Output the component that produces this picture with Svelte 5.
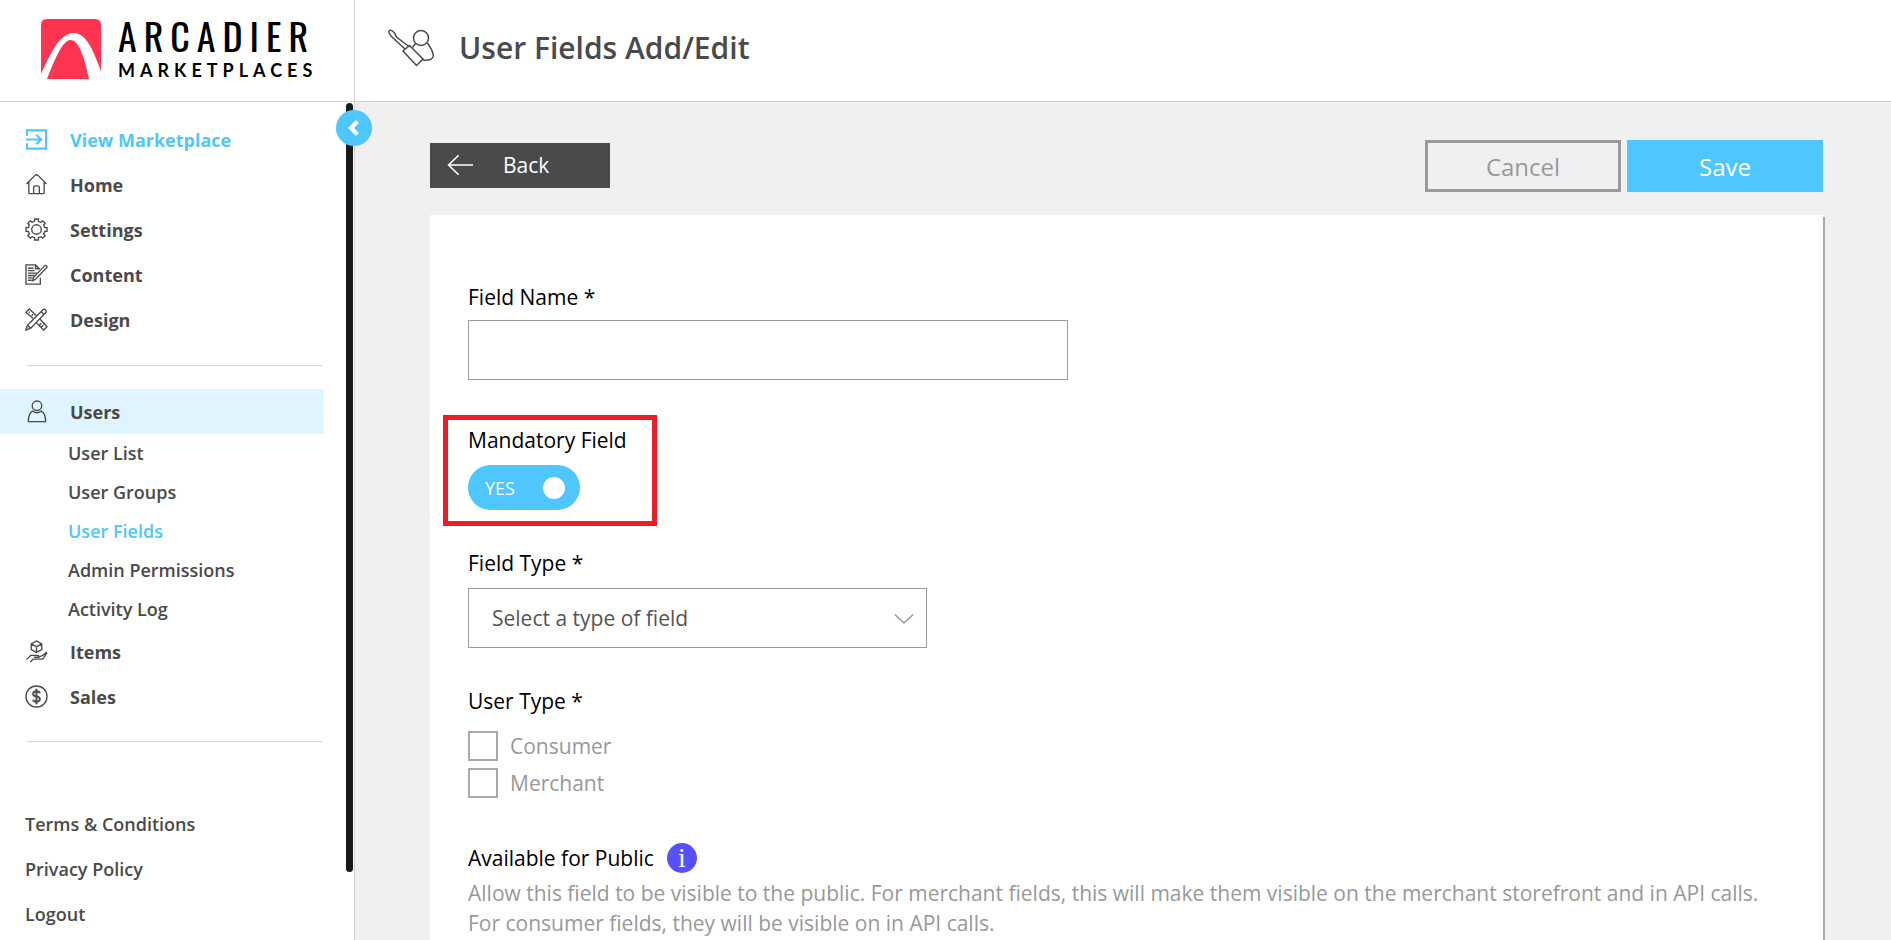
<script>
    const mainLinks = [
        { icon: "exit", label: "View Marketplace", highlight: true },
        { icon: "home", label: "Home" },
        { icon: "settings", label: "Settings" },
        { icon: "content", label: "Content" },
        { icon: "design", label: "Design" },
    ];
    const userLinks = ["User List", "User Groups", "User Fields", "Admin Permissions", "Activity Log"];
    const shopLinks = [
        { icon: "items", label: "Items" },
        { icon: "sales", label: "Sales" },
    ];
    const footerLinks = ["Terms & Conditions", "Privacy Policy", "Logout"];
    const fieldTypes = ["Textfield", "Number", "Checkbox", "Dropdown"];
    const userTypes = ["Consumer", "Merchant"];

    let fieldName = "";
    let mandatory = true;
    let fieldType = "";
    let selectedTypes = [];
    let currentPage = "User Fields";
    let collapsed = false;
</script>

{#snippet icon(name)}
    <svg class="icon" viewBox="0 0 24 24" aria-hidden="true">
        {#if name === "exit"}
            <path d="M2 8V2.500h20v19H2V16M1 12h16M11.500 7l5.500 5-5.500 5" stroke-width="2.200" />
        {:else if name === "home"}
            <path d="M1.500 11.500L10.500 2.500q1.500-1.300 3 0l9 9M4 9.500v11q0 1 1 1h14q1 0 1-1v-11M9 21.500v-6q0-2 2-2h2q2 0 2 2v6" />
        {:else if name === "settings"}
            <circle cx="12" cy="12" r="5" />
            <path d="M10 1h4v2.500l2.500 1L18.500 3 21 5.500 19.500 7.500l1 2.500H23v4h-2.500l-1 2.500L21 18.500 18.500 21l-2-1.500-2.500 1V23h-4v-2.500l-2.500-1L5.500 21 3 18.500l1.500-2-1-2.500H1v-4h2.500l1-2.500L3 5.500 5.500 3l2 1.500 2.500-1z" />
        {:else if name === "content"}
            <path d="M16 15.500V22H1V2h10l4.500 4.500M11 2v4h4M3 5.500h6M3 8h7M3 10.500h10M3 13h7M3 15.500h5M3 18h4" />
            <path d="M8 18.500l1-3.500L20.500 3q1-1 2 0t0 2L11 17z" />
        {:else if name === "design"}
            <path d="M8.500 11L1 4.500 4.500 1l7.500 7M15.500 11.500L23 19.500 19.500 23 12 15.500M15 18l2-2M17 20l2-2M19 17l2-1M4 5l1-1M7 8l1.500-1.500" />
            <path d="M1 23l1.500-5L18.500 2q1.500-1.500 3 0t0 3L6 21zM17 4l3 3M2.500 18L6 21" />
        {:else if name === "user"}
            <circle cx="12.500" cy="6" r="5" />
            <path d="M8 11.500q-4.500 2-4.500 11h18q0-9-4.500-11-4.500 3.500-9 0z" />
        {:else if name === "items"}
            <path d="M12 1l5.500 3v6L12 13 6.500 10V4zM6.500 4L12 7l5.500-3M12 7v6" />
            <path d="M1.500 20.500L6 16h7q2 0 1.500 2H9.500M14.500 18L20 15l2-2q1-.5.500 1l-4 6h-10l-3 3" />
        {:else if name === "sales"}
            <circle cx="12" cy="12" r="11" />
            <path d="M12 4v16M15.500 8.500Q15 6.500 12 6.500t-3.500 2.500T12 12t3.500 3-3.500 2.500-3.500-2" stroke-width="2" />
        {/if}
    </svg>
{/snippet}

<div class="page">
    <aside class="sidebar">
        <a class="logo" href="#home">
            <svg viewBox="0 0 60 60" aria-hidden="true">
                <path d="M0 6Q0 0 6 0h48q6 0 6 6v46C53 34 46 14 33 14 18 14 9 36 0 55z" fill="#ff3451" />
                <path d="M6 60C14 39 22 21 29.500 21 38 21 43 38 48 60z" fill="#ff3451" />
            </svg>
            <span class="brand">
                <span class="brand-name">ARCADIER</span>
                <span class="brand-sub">MARKETPLACES</span>
            </span>
        </a>
        <nav>
            {#each mainLinks as link}
                <a class="nav-link" class:highlight={link.highlight} href="#{link.icon}">
                    {@render icon(link.icon)}
                    {link.label}
                </a>
            {/each}
            <hr />
            <a class="nav-link selected" href="#users">
                {@render icon("user")}
                Users
            </a>
            {#each userLinks as label}
                <a class="sub-link" class:highlight={label === currentPage} href="#users">{label}</a>
            {/each}
            {#each shopLinks as link}
                <a class="nav-link" href="#{link.icon}">
                    {@render icon(link.icon)}
                    {link.label}
                </a>
            {/each}
            <hr class="last" />
            {#each footerLinks as label}
                <a class="footer-link" href="#info">{label}</a>
            {/each}
        </nav>
        <div class="scrollbar"></div>
        <button class="collapse" aria-label="Toggle menu" on:click={() => (collapsed = !collapsed)}>
            <svg viewBox="0 0 12 16" aria-hidden="true"><path d="M9.500 1.500L3 8l6.500 6.500" /></svg>
        </button>
    </aside>

    <main>
        <header>
            <svg viewBox="0 0 48 38" aria-hidden="true">
                <circle cx="34" cy="9" r="7.500" />
                <path d="M28.500 14.500l-3 4M40.500 14q7 10 5.500 14-2 4-10 3" />
                <path d="M16 22l6.500-5.500L36 30l-6.500 6.500zM18 20L4.500 7.500q-4-4-2-6 2-1 5 2.500l2 4L22.500 18" />
            </svg>
            <h1>User Fields Add/Edit</h1>
        </header>

        <div class="content">
            <div class="toolbar">
                <button class="back">
                    <svg viewBox="0 0 28 22" aria-hidden="true"><path d="M27 11H1M12 1L1.500 11 12 21" /></svg>
                    Back
                </button>
                <div class="actions">
                    <button class="cancel">Cancel</button>
                    <button class="save">Save</button>
                </div>
            </div>

            <form class="card">
                <div class="group">
                    <label class="title" for="field-name">Field Name *</label>
                    <input class="text" id="field-name" type="text" bind:value={fieldName} />
                </div>

                <div class="group mandatory">
                    <label class="title" for="mandatory">Mandatory Field</label>
                    <label class="switch" class:on={mandatory}>
                        <input id="mandatory" type="checkbox" bind:checked={mandatory} />
                        <span>{mandatory ? "YES" : "NO"}</span>
                        <span class="knob"></span>
                    </label>
                    <div class="marker"></div>
                </div>

                <div class="group">
                    <label class="title" for="field-type">Field Type *</label>
                    <div class="select">
                        <select id="field-type" bind:value={fieldType}>
                            <option value="">Select a type of field</option>
                            {#each fieldTypes as type}
                                <option value={type}>{type}</option>
                            {/each}
                        </select>
                        <svg viewBox="0 0 20 12" aria-hidden="true"><path d="M1 1.500l9 8.500 9-8.500" /></svg>
                    </div>
                </div>

                <fieldset class="group">
                    <legend class="title">User Type *</legend>
                    {#each userTypes as type}
                        <label class="check">
                            <input type="checkbox" value={type} bind:group={selectedTypes} />
                            {type}
                        </label>
                    {/each}
                </fieldset>

                <div class="group">
                    <div class="title public">
                        Available for Public
                        <span class="info">i</span>
                    </div>
                    <p>
                        Allow this field to be visible to the public. For merchant fields, this will make them visible on the merchant storefront and in API calls.<br />
                        For consumer fields, they will be visible on in API calls.
                    </p>
                </div>
            </form>
        </div>
    </main>
</div>

<style>
    :global(body) {
        overflow: hidden;
    }
    .page {
        display: flex;
        height: 100vh;
        overflow: hidden;
        background-color: #f0f0f0;
        color: #4a4a4a;
        font-family: "Open Sans", "Noto Sans", sans-serif;
    }
    .page * {
        box-sizing: border-box;
    }
    a {
        color: inherit;
        text-decoration: none;
    }
    button,
    input,
    select {
        margin: 0;
        font-family: inherit;
        border-radius: 0;
    }
    svg {
        fill: none;
        stroke: currentColor;
        flex: none;
    }

    .sidebar {
        position: relative;
        flex: none;
        width: 355px;
        background-color: #fff;
        border-right: 1px solid #d0d0d0;
    }
    .logo {
        display: flex;
        gap: 17px;
        height: 102px;
        padding: 19px 0 0 41px;
        border-bottom: 1px solid #d0d0d0;
        color: #000;
    }
    .logo svg {
        width: 60px;
        height: 60px;
        stroke: none;
    }
    .brand {
        display: flex;
        flex-direction: column;
    }
    .brand-name {
        font-family: "Oswald", "Roboto Condensed", "DejaVu Sans Condensed", sans-serif;
        font-size: 38px;
        letter-spacing: 7px;
        line-height: 32px;
    }
    .brand-sub {
        font-family: Lato, sans-serif;
        font-size: 18px;
        font-weight: 700;
        letter-spacing: 5px;
        line-height: 38px;
    }
    nav {
        padding-top: 15px;
        font-size: 18px;
    }
    .nav-link {
        display: flex;
        align-items: center;
        gap: 22px;
        width: 324px;
        height: 45px;
        padding-left: 25px;
        font-weight: 700;
    }
    .icon {
        width: 23px;
        height: 23px;
        stroke-width: 1.4;
    }
    .selected {
        background-color: #dff4fe;
    }
    .highlight {
        color: #50c6ff;
    }
    hr {
        width: 295px;
        height: 1px;
        margin: 23px 0 23px 27px;
        border: 0;
        background-color: #d4d5d5;
    }
    hr.last {
        margin-top: 22px;
        margin-bottom: 60px;
    }
    .sub-link,
    .footer-link {
        display: block;
        padding-left: 68px;
        line-height: 39px;
        font-weight: 600;
    }
    .footer-link {
        padding-left: 25px;
        line-height: 45px;
    }
    .scrollbar {
        position: absolute;
        top: 103px;
        right: 1px;
        bottom: 68px;
        width: 7px;
        border-radius: 4px;
        background-color: #18191a;
    }
    .collapse {
        position: absolute;
        top: 110px;
        right: -18px;
        display: flex;
        align-items: center;
        justify-content: center;
        width: 36px;
        height: 36px;
        padding: 0;
        border: 0;
        border-radius: 50%;
        background-color: #50c6ff;
        color: #fff;
    }
    .collapse svg {
        width: 12px;
        height: 16px;
        stroke-width: 4;
    }

    main {
        flex: 1;
        min-width: 0;
    }
    header {
        display: flex;
        align-items: center;
        gap: 24px;
        height: 102px;
        padding: 0 32px 6px;
        background-color: #fff;
        border-bottom: 1px solid #d0d0d0;
    }
    header svg {
        width: 48px;
        height: 38px;
        stroke-width: 1.5;
    }
    h1 {
        margin: 0;
        font-size: 30px;
        font-weight: 600;
    }
    .content {
        padding: 38px 68px 0 75px;
    }
    .toolbar {
        display: flex;
        align-items: flex-start;
        justify-content: space-between;
        margin-bottom: 23px;
    }
    .back {
        display: flex;
        align-items: center;
        gap: 29px;
        width: 180px;
        height: 45px;
        margin-top: 3px;
        padding: 0 17px 2px;
        border: 0;
        background-color: #4a4a4a;
        color: #fff;
        font-size: 21px;
    }
    .back svg {
        width: 27px;
        height: 22px;
        stroke-width: 1.5;
    }
    .actions {
        display: flex;
        gap: 6px;
    }
    .actions button {
        width: 196px;
        height: 52px;
        padding: 0;
        border: 3px solid #999;
        background: none;
        color: #999;
        font-size: 24px;
    }
    .actions .save {
        border-color: #50c6ff;
        background-color: #50c6ff;
        color: #fff;
    }

    .card {
        padding: 67px 38px 30px;
        background-color: #fff;
        box-shadow: 2px 2px 0 #aaa;
    }
    .group {
        margin: 0 0 38px;
        padding: 0;
        border: 0;
    }
    .group:first-child,
    fieldset.group {
        margin-bottom: 45px;
    }
    .title {
        display: block;
        padding: 0;
        margin-bottom: 10px;
        color: #000;
        font-size: 21px;
        line-height: 30px;
    }
    .text {
        display: block;
        width: 600px;
        height: 60px;
        padding: 0 23px;
        border: 1px solid #999;
        font-size: 21px;
    }
    .group:first-child .title {
        margin-bottom: 8px;
    }
    .mandatory {
        position: relative;
    }
    .switch {
        display: flex;
        align-items: center;
        justify-content: space-between;
        width: 112px;
        height: 45px;
        padding: 0 15px 0 17px;
        border-radius: 23px;
        background-color: #999;
        color: #fff;
        font-size: 18px;
    }
    .switch.on {
        background-color: #50c6ff;
    }
    .switch input {
        position: absolute;
        opacity: 0;
    }
    .knob {
        width: 22px;
        height: 22px;
        border-radius: 50%;
        background-color: #fff;
    }
    .marker {
        position: absolute;
        top: -10px;
        left: -25px;
        width: 214px;
        height: 111px;
        border: 5px solid #ee1c25;
        pointer-events: none;
    }
    .select {
        position: relative;
        width: 459px;
    }
    select {
        display: block;
        width: 100%;
        height: 60px;
        padding: 0 60px 0 23px;
        border: 1px solid #999;
        appearance: none;
        background-color: #fff;
        color: #555;
        font-size: 21px;
    }
    .select svg {
        position: absolute;
        top: 25px;
        right: 13px;
        width: 20px;
        height: 12px;
        color: #999;
        stroke-width: 1.5;
        pointer-events: none;
    }
    legend.title {
        margin-bottom: 15px;
    }
    .check {
        display: flex;
        align-items: center;
        gap: 12px;
        height: 30px;
        color: #999;
        font-size: 21px;
    }
    .check + .check {
        margin-top: 7px;
    }
    .check input {
        width: 30px;
        height: 30px;
        border: 2px solid #aaa;
        appearance: none;
    }
    .check input:checked {
        background-color: #50c6ff;
    }
    .public {
        display: flex;
        align-items: center;
        gap: 13px;
        margin-bottom: 5px;
    }
    .info {
        width: 30px;
        height: 30px;
        border-radius: 50%;
        background-color: #584fff;
        color: #fff;
        font-family: "Liberation Serif", serif;
        font-size: 28px;
        line-height: 29px;
        text-align: center;
    }
    p {
        margin: 0;
        color: #999;
        font-size: 21px;
        line-height: 30px;
    }
</style>
